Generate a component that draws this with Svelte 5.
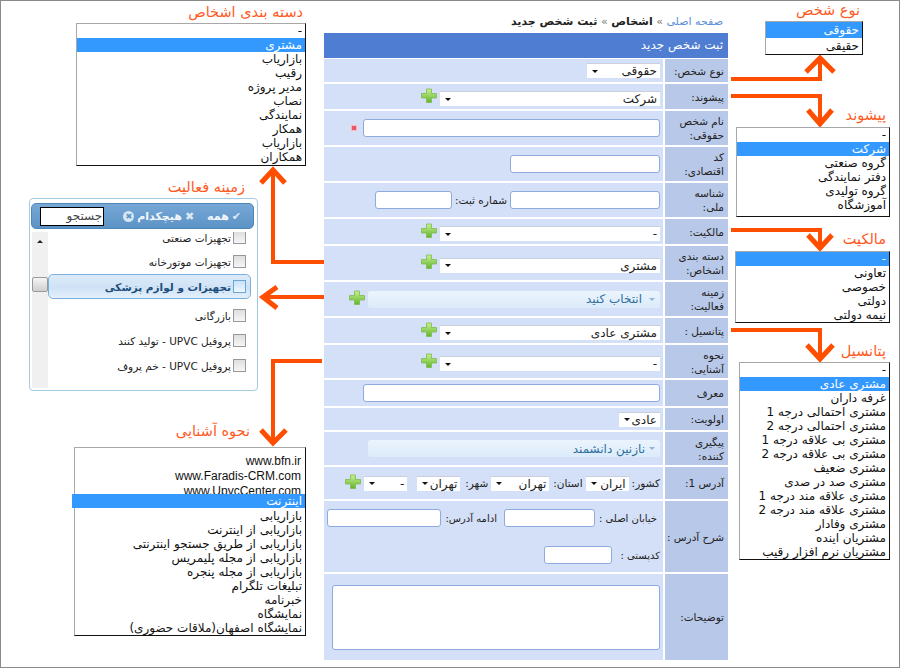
<script>
  const prefixes = ['-', 'شرکت', 'گروه صنعتی', 'دفتر نمایندگی', 'گروه تولیدی', 'آموزشگاه'];
  const owners = ['-', 'تعاونی', 'خصوصی', 'دولتی', 'نیمه دولتی'];
  const potentials = ['-', 'مشتری عادی', 'غرفه داران', 'مشتری احتمالی درجه 1', 'مشتری احتمالی درجه 2', 'مشتری بی علاقه درجه 1', 'مشتری بی علاقه درجه 2', 'مشتری ضعیف', 'مشتری صد در صدی', 'مشتری علاقه مند درجه 1', 'مشتری علاقه مند درجه 2', 'مشتری وفادار', 'مشتریان اینده', 'مشتریان نرم افزار رقیب'];
  const groups = ['-', 'مشتری', 'بازاریاب', 'رقیب', 'مدیر پروژه', 'نصاب', 'نمایندگی', 'همکار', 'بازاریاب', 'همکاران'];
  const sources = ['بازاریابی', 'بازاریابی از اینترنت', 'بازاریابی از طریق جستجو اینترنتی', 'بازاریابی از مجله پلیمریس', 'بازاریابی از مجله پنجره', 'تبلیغات تلگرام', 'خبرنامه', 'نمایشگاه', 'نمایشگاه اصفهان(ملاقات حضوری)'];
</script>

{#snippet plus()}
  <svg class="plus" width="16" height="15" viewBox="0 0 16 15">
    <defs>
      <linearGradient id="pg" x1="0" y1="0" x2="0" y2="1">
        <stop offset="0" stop-color="#c8f091" />
        <stop offset="1" stop-color="#62b52e" />
      </linearGradient>
    </defs>
    <path d="M5.5 1h5v4.500H15.500v4.500H10.500V14.500h-5V10H.5V5.500h5z" fill="url(#pg)" stroke="#7dbb4b" stroke-width=".8" stroke-linejoin="round" />
  </svg>
{/snippet}

{#snippet sel(value, cls)}
  <div class="select {cls}"><span>{value}</span><i class="caret"></i></div>
{/snippet}

{#snippet picker(value, cls)}
  <div class="picker {cls}"><i class="tri"></i><span>{value}</span></div>
{/snippet}

{#snippet listbox(items, active, cls)}
  <div class="listbox {cls}" dir="rtl">
    {#each items as item, i}
      <div class="opt" class:active={i === active}>{item}</div>
    {/each}
  </div>
{/snippet}

<div class="page">
  <div class="crumbs" dir="rtl">
    <a href="#top">صفحه اصلی</a> <em>»</em> <b>اشخاص</b> <em>»</em> <b>ثبت شخص جدید</b>
  </div>

  <div class="form" dir="rtl">
    <div class="title">ثبت شخص جدید</div>

    <div class="row r23"><div class="label">نوع شخص:</div><div class="field">{@render sel('حقوقی', 'w73')}</div></div>
    <div class="row r25"><div class="label">پیشوند:</div><div class="field">{@render sel('شرکت', 'w220')}{@render plus()}</div></div>
    <div class="row r34"><div class="label">نام شخص<br />حقوقی:</div><div class="field"><input class="w297" /><span class="star"></span></div></div>
    <div class="row r34"><div class="label">کد<br />اقتصادی:</div><div class="field"><input class="w150" /></div></div>
    <div class="row r34"><div class="label">شناسه<br />ملی:</div><div class="field"><input class="w150" /><span class="inner">شماره ثبت:</span><input class="w77" /></div></div>
    <div class="row r25"><div class="label">مالکیت:</div><div class="field">{@render sel('-', 'w220')}{@render plus()}</div></div>
    <div class="row r34"><div class="label">دسته بندی<br />اشخاص:</div><div class="field">{@render sel('مشتری', 'w220')}{@render plus()}</div></div>
    <div class="row r34"><div class="label">زمینه<br />فعالیت:</div><div class="field">{@render picker('انتخاب کنید', 'loose')}{@render plus()}</div></div>
    <div class="row r25"><div class="label">پتانسیل :</div><div class="field">{@render sel('مشتری عادی', 'w220')}{@render plus()}</div></div>
    <div class="row r33"><div class="label">نحوه<br />آشنایی:</div><div class="field">{@render sel('-', 'w220')}{@render plus()}</div></div>
    <div class="row r26"><div class="label">معرف</div><div class="field"><input class="w297" /></div></div>
    <div class="row r22"><div class="label">اولویت:</div><div class="field">{@render sel('عادی', 'w41')}</div></div>
    <div class="row r33"><div class="label">پیگیری<br />کننده:</div><div class="field">{@render picker('نازنین دانشمند', '')}</div></div>
    <div class="row r32">
      <div class="label">آدرس 1:</div>
      <div class="field addr">
        <span class="inner">کشور:</span>{@render sel('ایران', 'w43')}
        <span class="inner">استان:</span>{@render sel('تهران', 'w58')}
        <span class="inner">شهر:</span>{@render sel('تهران', 'w43 city')}
        {@render sel('-', 'w43 last')}{@render plus()}
      </div>
    </div>
    <div class="row r71">
      <div class="label">شرح آدرس :</div>
      <div class="field stack">
        <div class="line"><span class="inner">خیابان اصلی :</span><input class="w91" /><span class="inner">ادامه آدرس:</span><input class="w114" /></div>
        <div class="line zip"><span class="inner">کدپستی :</span><input class="w68" /></div>
      </div>
    </div>
    <div class="row r86"><div class="label">توضیحات:</div><div class="field"><textarea></textarea></div></div>
  </div>

  <!-- annotation layer: arrows and callouts sit on a free canvas around the form -->
  <svg class="arrows" width="900" height="668" viewBox="0 0 900 668" fill="none" stroke="#ff4e00" stroke-width="4">
    <path d="M731 79H820V60M324 262H273V171M324 297H264M322 361H273V442M731 96H820V123M731 230H820V247M731 330H820V358" />
    <g stroke-width="5">
      <path d="M806 72L820 58L834 72" />
      <path d="M808 110L820 124L832 110" />
      <path d="M808 235L820 248L832 235" />
      <path d="M807 345L820 359L833 345" />
      <path d="M261 183L273 170L285 183" />
      <path d="M277 287L263 297L277 308" />
      <path d="M261 430L273 443L286 430" />
    </g>
  </svg>

  <div class="call c-type">نوع شخص</div>
  <div class="call c-prefix">پیشوند</div>
  <div class="call c-owner">مالکیت</div>
  <div class="call c-pot">پتانسیل</div>
  <div class="call c-group">دسته بندی اشخاص</div>
  <div class="call c-field">زمینه فعالیت</div>
  <div class="call c-source">نحوه آشنایی</div>

  {@render listbox(['حقوقی', 'حقیقی'], 0, 'b-type')}
  {@render listbox(prefixes, 1, 'b-prefix')}
  {@render listbox(owners, 0, 'b-owner')}
  {@render listbox(potentials, 1, 'b-pot')}
  {@render listbox(groups, 1, 'b-group')}

  <div class="listbox b-source" dir="rtl">
    <div class="www">www.bfn.ir</div>
    <div class="www">www.Faradis-CRM.com</div>
    <div class="www cut">www.UpvcCenter.com</div>
    <div class="opt active wide">اینترنت</div>
    <div class="rest">
      {#each sources as item}
        <div class="opt">{item}</div>
      {/each}
    </div>
  </div>

  <div class="multi" dir="rtl">
    <div class="bar">
      <span class="tick">✔</span><b>همه</b>
      <span class="cross">✖</span><b>هیچکدام</b>
      <span class="circ">✖</span>
      <input class="search" value="جستجو" />
    </div>
    <div class="body">
      <div class="items">
        <div class="item first"><i class="check"></i>تجهیزات صنعتی</div>
        <div class="item"><i class="check"></i>تجهیزات موتورخانه</div>
        <div class="item hover"><i class="check"></i>تجهیزات و لوازم پزشکی</div>
        <div class="item"><i class="check"></i>بازرگانی</div>
        <div class="item"><i class="check"></i>پروفیل UPVC - تولید کنند</div>
        <div class="item"><i class="check"></i>پروفیل UPVC - خم پروف</div>
      </div>
      <div class="scroll"><i class="up"></i><i class="thumb"></i></div>
    </div>
  </div>
</div>

<style>
  :global(body) {
    margin: 0;
    background: #fff;
  }

  .page {
    position: relative;
    width: 900px;
    height: 668px;
    box-sizing: border-box;
    border-top: 1px solid #8a8a8a;
    border-bottom: 1px solid #8a8a8a;
    box-shadow: inset 1px 0 #8a8a8a, inset -1px 0 #8a8a8a;
    padding-left: 324px;
    font: 10.5px "DejaVu Sans", sans-serif;
    color: #222;
    overflow: hidden;
  }

  .crumbs {
    width: 399px;
    height: 32px;
    box-sizing: border-box;
    padding-top: 14px;
    font-size: 11px;
    line-height: 14px;
  }
  .crumbs a {
    color: #5b8fd8;
    text-decoration: none;
  }
  .crumbs em {
    color: #777;
    font-style: normal;
  }

  .form {
    width: 404px;
  }
  .title {
    height: 25px;
    line-height: 25px;
    padding-right: 5px;
    background: #4f7dd2;
    color: #fff;
    font-size: 12px;
    margin-bottom: 1px;
  }

  .row {
    display: grid;
    grid-template-columns: 63px 339px;
    column-gap: 2px;
    margin-bottom: 2px;
  }
  .r22 { height: 22px; }
  .r23 { height: 23px; }
  .r25 { height: 25px; }
  .r26 { height: 26px; }
  .r32 { height: 32px; }
  .r33 { height: 33px; }
  .r34 { height: 34px; }
  .r71 { height: 71px; }
  .r86 { height: 86px; }

  .label {
    align-self: stretch;
    display: flex;
    align-items: center;
    padding-right: 4px;
    background: #b8c8e8;
    line-height: 14px;
    white-space: nowrap;
  }
  .field {
    display: flex;
    align-items: center;
    gap: 3px;
    padding-right: 3px;
    background: #d4e0f7;
  }

  input,
  textarea {
    box-sizing: border-box;
    height: 18px;
    padding: 0;
    background: #fff;
    border: 1px solid #8faadc;
    border-radius: 3px;
    outline: none;
  }
  .w297 { width: 297px; }
  .w150 { width: 150px; }
  .w114 { width: 114px; }
  .w91 { width: 91px; }
  .w77 { width: 77px; }
  .w68 { width: 68px; }

  textarea {
    width: 328px;
    height: 65px;
    resize: none;
  }

  .star {
    width: 4px;
    height: 4px;
    margin-right: 4px;
    background: #ee5566;
    box-shadow: 0 0 0 1px #f9b7bd;
  }

  .inner {
    white-space: nowrap;
  }

  .select {
    box-sizing: border-box;
    display: flex;
    justify-content: space-between;
    align-items: center;
    height: 15px;
    padding: 0 3px 0 5px;
    background: #fff;
    border-top: 1px solid #c9cfdc;
    font-size: 12px;
    white-space: nowrap;
  }
  .w220 { width: 220px; margin-top: 4px; }
  .w73 { width: 73px; }
  .w58 { width: 58px; margin-right: 1px; }
  .w43 { width: 43px; }
  .w41 { width: 41px; }
  .city { margin-right: 2px; }
  .last { margin-right: 7px; }
  .caret {
    border: 3px solid transparent;
    border-top: 3px solid #111;
    border-bottom: 0;
  }
  .plus {
    margin-bottom: 3px;
  }

  .picker {
    box-sizing: border-box;
    display: flex;
    align-items: center;
    gap: 4px;
    width: 292px;
    height: 17px;
    padding-right: 5px;
    border-radius: 3px;
    background: linear-gradient(#eaf4fd, #dcebfa);
    color: #2e6e9e;
    font-size: 12px;
  }
  .picker.loose {
    gap: 7px;
  }
  .tri {
    border: 3px solid transparent;
    border-top: 3px solid #8fb6d8;
    border-bottom: 0;
  }

  .stack {
    flex-direction: column;
    align-items: flex-start;
    gap: 19px;
    padding-right: 6px;
    justify-content: center;
  }
  .line {
    display: flex;
    align-items: center;
  }
  .line .inner {
    margin-left: 4px;
    font-size: 10px;
  }
  .line input {
    margin-left: 7px;
  }
  .zip {
    margin-right: -3px;
  }
  .zip .inner {
    margin-left: 8px;
  }

  .arrows {
    position: absolute;
    left: 0;
    top: -1px;
    pointer-events: none;
  }

  .call {
    position: absolute;
    color: #ff5a1e;
    font-size: 14.5px;
    line-height: 18px;
    white-space: nowrap;
    direction: rtl;
  }
  .c-type { right: 40px; top: 0; }
  .c-prefix { right: 14px; top: 105px; }
  .c-owner { right: 14px; top: 229px; }
  .c-pot { right: 14px; top: 341px; }
  .c-group { right: 597px; top: 2px; }
  .c-field { right: 655px; top: 177px; }
  .c-source { right: 650px; top: 421px; }

  .listbox {
    position: absolute;
    box-sizing: border-box;
    background: #fff;
    border: 1px solid #a8a8a8;
    border-right-color: #111;
    border-bottom-color: #111;
    font-size: 12px;
    color: #111;
    overflow: hidden;
  }
  .opt {
    height: 14px;
    line-height: 14px;
    padding-right: 3px;
    white-space: nowrap;
  }
  .opt.active {
    background: #3399ff;
    color: #fff;
  }
  .b-type { left: 765px; top: 20px; width: 98px; height: 34px; }
  .b-type .opt { height: 16px; line-height: 16px; }
  .b-prefix { left: 736px; top: 126px; width: 154px; height: 90px; }
  .b-owner { left: 735px; top: 250px; width: 155px; height: 72px; }
  .b-pot { left: 739px; top: 361px; width: 151px; height: 198px; }
  .b-group { left: 76px; top: 22px; width: 230px; height: 143px; }

  .b-source {
    left: 74px;
    top: 446px;
    width: 232px;
    height: 189px;
    overflow: visible;
    border-left-color: #a8a8a8;
    padding-top: 6px;
  }
  .www {
    height: 15px;
    padding-right: 4px;
    font: 12px/15px "Liberation Sans", sans-serif;
    direction: ltr;
    text-align: right;
  }
  .www.cut {
    height: 10px;
    overflow: hidden;
  }
  .wide {
    margin-left: -3px;
  }
  .rest {
    padding-top: 1px;
  }

  .multi {
    position: absolute;
    left: 29px;
    top: 197px;
    box-sizing: border-box;
    width: 229px;
    height: 193px;
    padding: 4px 3px 2px 1px;
    background: #fff;
    border: 1px solid #a6c9e2;
    border-radius: 4px;
  }
  .bar {
    display: flex;
    align-items: center;
    gap: 3px;
    height: 26px;
    box-sizing: border-box;
    padding-right: 12px;
    background: linear-gradient(#77a8d6, #5c93c6);
    border: 1px solid #4f86b8;
    border-radius: 5px;
    color: #f2f6fa;
    font-size: 11px;
  }
  .tick,
  .cross {
    color: #dbe9f5;
  }
  .cross {
    margin-right: 10px;
  }
  .circ {
    width: 11px;
    height: 11px;
    line-height: 11px;
    font-size: 8px;
    text-align: center;
    border-radius: 50%;
    background: #d7e6f3;
    color: #5c93c6;
  }
  .search {
    width: 64px;
    height: 19px;
    margin-right: 16px;
    border: 1px solid #000;
    border-radius: 0;
    font: 12px "DejaVu Sans", sans-serif;
    color: #444;
    padding-right: 1px;
  }
  .body {
    display: flex;
    height: 156px;
    margin-top: 3px;
  }
  .items {
    flex: 1;
    overflow: hidden;
  }
  .item {
    display: flex;
    align-items: center;
    gap: 2px;
    height: 25px;
    box-sizing: border-box;
    padding-right: 8px;
    white-space: nowrap;
    font-size: 10.5px;
  }
  .item.first {
    height: 12px;
    align-items: flex-end;
  }
  .item.first + .item {
    margin-top: 5px;
  }
  .item.hover {
    margin: 0 3px 4px 0;
    background: linear-gradient(#dcebfa, #cfe2f5 55%, #e4f0fb);
    border: 1px solid #7cb0dc;
    border-radius: 5px;
    color: #1d4e7c;
    font-weight: bold;
    padding-right: 4px;
  }
  .check {
    box-sizing: border-box;
    width: 13px;
    height: 13px;
    background: linear-gradient(#dedede, #f6f6f6);
    border: 1px solid #999;
    flex: none;
  }
  .hover .check {
    background: linear-gradient(#c7e2f7, #eef7ff);
    border-color: #6ea5d3;
  }
  .scroll {
    position: relative;
    width: 16px;
    margin-left: 1px;
    background: #f0f0f0;
  }
  .up {
    position: absolute;
    left: 5px;
    top: 8px;
    border: 3px solid transparent;
    border-bottom: 3px solid #222;
    border-top: 0;
  }
  .thumb {
    position: absolute;
    left: 0;
    top: 45px;
    box-sizing: border-box;
    width: 16px;
    height: 15px;
    background: linear-gradient(#f5f5f5, #cfcfcf);
    border: 1px solid #999;
    border-radius: 2px;
  }
</style>
